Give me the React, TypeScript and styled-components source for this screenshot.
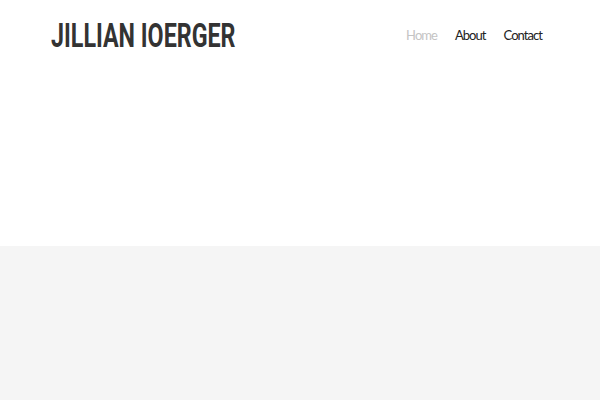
import React from "react";
import styled, { createGlobalStyle } from "styled-components";

const Global = createGlobalStyle`
  html, body { margin: 0; padding: 0; background: #fff; }
  body { font-family: Lato, "Noto Sans", sans-serif; }
`;

const Page = styled.div`
  width: 600px;
  height: 400px;
  display: flex;
  flex-direction: column;
  overflow: hidden;
`;

const Header = styled.header`
  height: 246px;
  background: #fff;
  display: flex;
  align-items: flex-start;
  justify-content: space-between;
  padding: 0 58px 0 51px;
  box-sizing: border-box;
`;

const Logo = styled.h1`
  margin: 17px 0 0 0;
  font-family: Roboto, sans-serif;
  font-weight: 700;
  font-size: 33px;
  line-height: 38px;
  color: #333;
  white-space: nowrap;
  display: inline-block;
  transform: scaleX(0.705);
  transform-origin: left center;
`;

const Nav = styled.nav`
  display: flex;
  gap: 18px;
  margin-top: 27px;
`;

const NavLink = styled.a<{ $active?: boolean }>`
  font-family: Lato, sans-serif;
  font-size: 13px;
  line-height: 16px;
  letter-spacing: -0.95px;
  color: ${(p) => (p.$active ? "#c4c4c4" : "#222")};
  text-decoration: none;
`;

const Band = styled.section`
  flex: 1;
  background: #f5f5f5;
`;

export default function App() {
  return (
    <>
      <Global />
      <Page>
        <Header>
          <Logo>JILLIAN IOERGER</Logo>
          <Nav>
            <NavLink $active href="#">Home</NavLink>
            <NavLink href="#">About</NavLink>
            <NavLink href="#">Contact</NavLink>
          </Nav>
        </Header>
        <Band />
      </Page>
    </>
  );
}
